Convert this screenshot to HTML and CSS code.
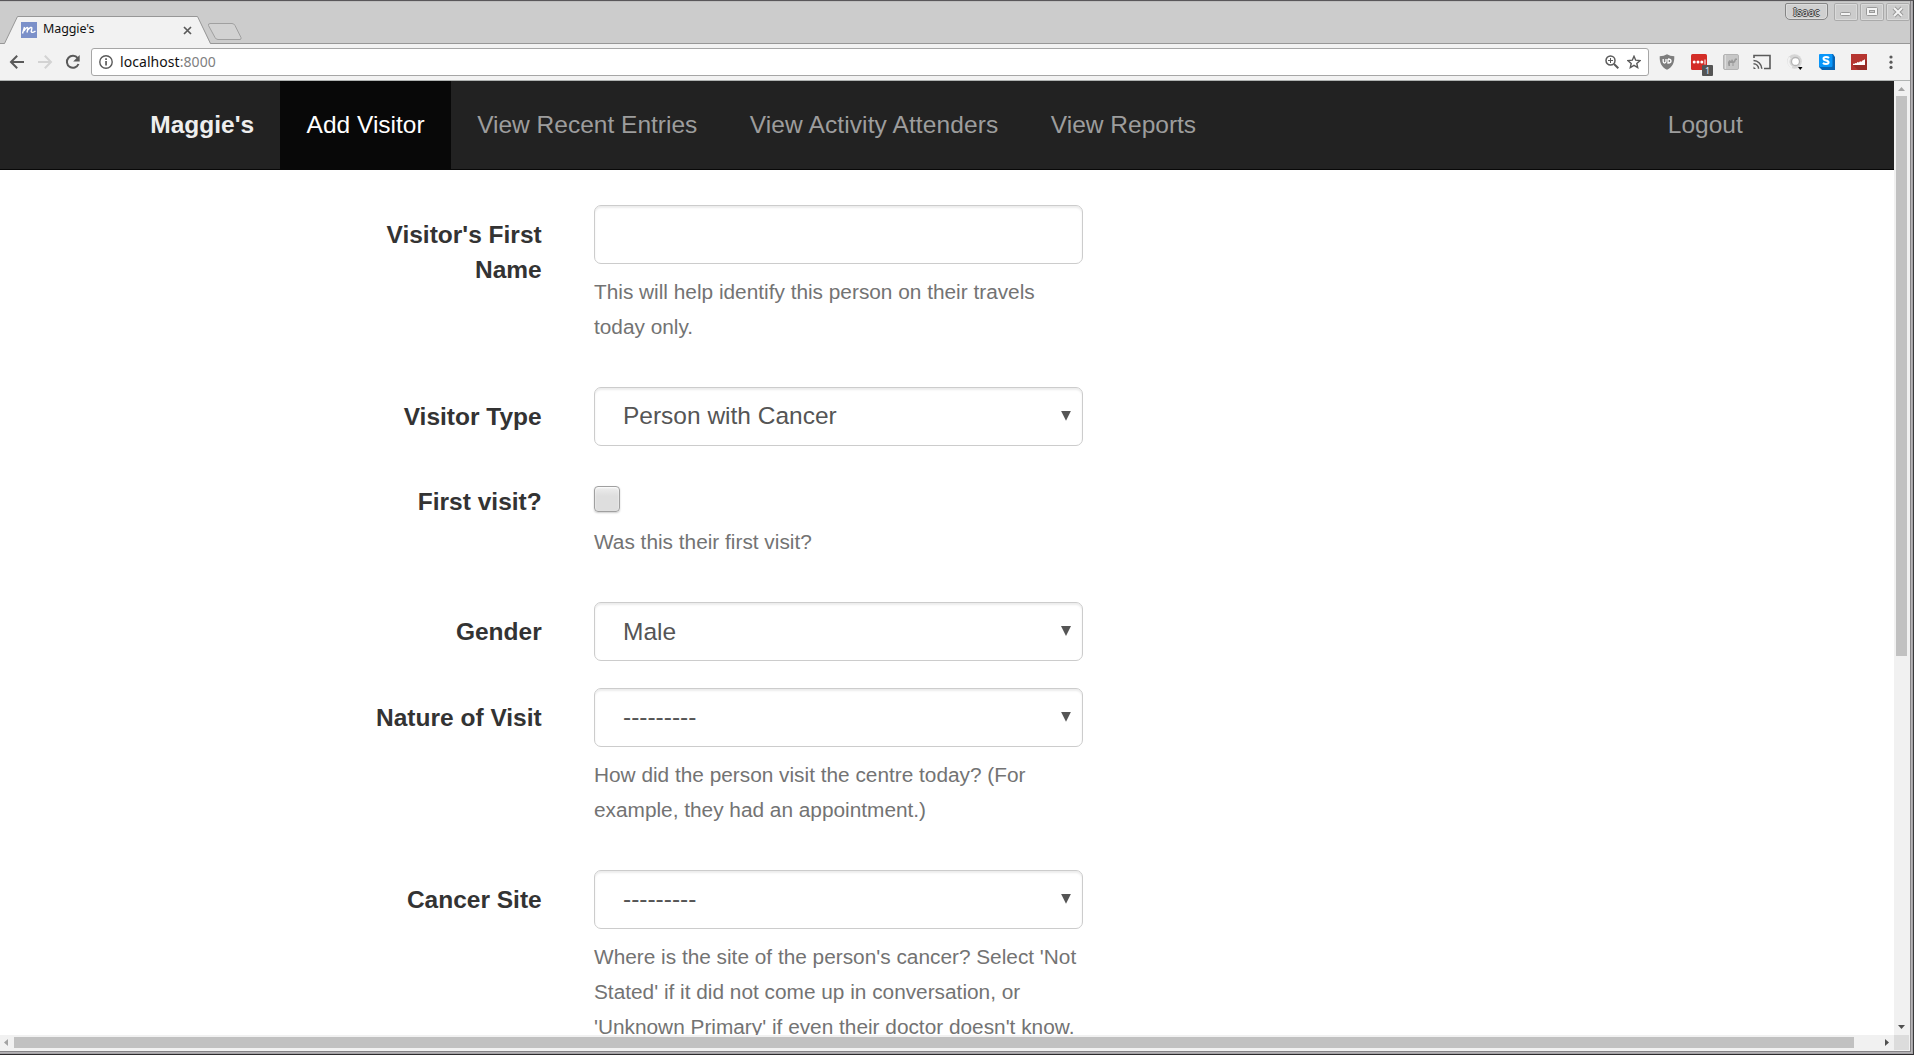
FILE: index.html
```html
<!DOCTYPE html>
<html lang="en">
<head>
<meta charset="utf-8">
<title>Maggie's</title>
<link rel="stylesheet" href="styles.css">
</head>
<body>
<div class="window">
  <header class="titlebar">
    <svg class="tab-shape" width="260" height="43" viewBox="0 0 260 43">
      <path d="M0 42.5H4.500L17.500 15.500H197.500L210 42.500H260V43H0Z" fill="#f2f2f2"/>
      <path d="M0 42.500H4.500L17.500 15.500H197.500L210.500 42.500H260" fill="none" stroke="#979797"/>
      <path d="M210 22.500H232Q234 22.500 235 24.500L241 36.500Q241.500 38.500 240 38.500H218Q216 38.500 215 36.500L208.500 24.500Q208 22.500 210 22.500Z" fill="#d2d2d2" stroke="#a0a0a0"/>
    </svg>
    <div class="tab">
      <svg width="16" height="16" viewBox="0 0 16 16"><path fill="#7b90c9" d="M0 0h16v16H0z"/><path d="M1.500 11.500 3.500 5M3 9C5 5 7.300 4.500 6.800 6.800L6 10.500M6.500 8.500C8.500 5 11.300 4.500 10.800 6.800L10.200 9.500Q11.500 11.500 14.500 9" fill="none" stroke="#fff" stroke-width="1.400"/></svg>
      <span class="tab-title">Maggie's</span>
      <svg width="9" height="9" viewBox="0 0 9 9"><path d="M1 1l7 7M8 1 1 8" stroke="#5a5a5a" stroke-width="1.700"/></svg>
    </div>
    <div class="controls">
      <span class="profile">Isaac</span>
      <span class="ctl"><svg width="24" height="18"><rect x="6.500" y="9.500" width="10" height="3" rx="1" fill="#f4f4f4" stroke="#999"/></svg></span>
      <span class="ctl"><svg width="24" height="18"><rect x="6.500" y="4.500" width="11" height="8" rx="1" fill="#f4f4f4" stroke="#999"/><rect x="9.500" y="7.500" width="5" height="2" fill="#ccc" stroke="#999"/></svg></span>
      <span class="ctl"><svg width="24" height="18"><path d="M8 5l8 8M16 5l-8 8" stroke="#999" stroke-width="4"/><path d="M8 5l8 8M16 5l-8 8" stroke="#f4f4f4" stroke-width="2"/></svg></span>
    </div>
  </header>

  <div class="toolbar">
    <div class="nav-icons">
      <svg width="16" height="16" viewBox="0 0 16 16"><path d="M15 8H2M8.200 1.800 2 8l6.200 6.200" fill="none" stroke="#5a5a5a" stroke-width="2"/></svg>
      <svg width="16" height="16" viewBox="0 0 16 16"><path d="M1 8h13M7.800 1.800 14 8l-6.200 6.200" fill="none" stroke="#d3d3d3" stroke-width="2"/></svg>
      <svg width="16" height="16" viewBox="0 0 16 16"><path d="M12.700 4.200A6 6 0 1 0 13.500 10" fill="none" stroke="#5a5a5a" stroke-width="2"/><path d="M14.700 1v6.500H8.200Z" fill="#5a5a5a"/></svg>
    </div>
    <div class="omnibox">
      <svg width="14" height="14" viewBox="0 0 14 14"><circle cx="7" cy="7" r="6.200" fill="none" stroke="#5a5a5a" stroke-width="1.400"/><path d="M6.200 6h1.700v4.500H6.200zM6.200 3.300h1.700V5H6.200z" fill="#5a5a5a"/></svg>
      <span class="url">localhost<span class="port">:8000</span></span>
      <svg width="14" height="14" viewBox="0 0 14 14"><circle cx="5.500" cy="5.500" r="4.500" fill="none" stroke="#5a5a5a" stroke-width="1.500"/><path d="M9 9l4.300 4.300" stroke="#5a5a5a" stroke-width="2"/><path d="M3 5.500h5M5.500 3v5" stroke="#5a5a5a"/></svg>
      <svg class="star" width="14" height="14" viewBox="0 0 14 14"><path d="M7 1.300 8.700 5.200 13 5.600 9.800 8.400 10.700 12.600 7 10.400 3.300 12.600 4.200 8.400 1 5.600 5.300 5.200Z" fill="none" stroke="#5a5a5a" stroke-width="1.400"/></svg>
    </div>
    <div class="extensions">
      <svg width="16" height="16" viewBox="0 0 16 16"><path d="M8 .3Q11 2.300 15.300 2.300C15.500 9 13.500 13 8 15.800 2.500 13 .500 9 .700 2.300Q5 2.300 8 .3Z" fill="#7d7d7d"/><path d="M4.200 5v2.500q0 1.500 1.300 1.500T7 7.500V5M9 5v4q3 0 3-2T9 5" fill="none" stroke="#fff" stroke-width="1.300"/></svg>
      <span class="ext-badged">
        <svg width="16" height="16" viewBox="0 0 16 16"><rect width="16" height="16" rx="1.500" fill="#d32d27"/><circle cx="3.200" cy="8" r="1.500" fill="#fff"/><circle cx="7" cy="8" r="1.500" fill="#fff"/><circle cx="10.800" cy="8" r="1.500" fill="#fff"/><path d="M14 5.500v5" stroke="#fff"/></svg>
        <span class="badge">1</span>
      </span>
      <svg width="16" height="16" viewBox="0 0 16 16"><rect x=".5" y=".5" width="15" height="15" rx="1.500" fill="#c6c6c6" stroke="#b4b4b4"/><path d="M2.500 1v14" stroke="#dedede"/><path d="M5 12V8L6.500 6 8 7l1-2 1.500 2.500L12 4.500h2V6h-1L12 8.500l-1.500.5v3h-1V9H7v3H6V9.500L5.500 12Z" fill="#989898"/></svg>
      <svg width="18" height="16" viewBox="0 0 18 16"><path d="M1 4V1.500h16v13h-6" fill="none" stroke="#5a5a5a" stroke-width="1.600"/><path d="M.5 6.500a8.500 8.500 0 0 1 8.300 8.300M.5 9.700a5.200 5.200 0 0 1 5.100 5.100" fill="none" stroke="#5a5a5a" stroke-width="1.500"/><path d="M.5 12.500 3 15H.5Z" fill="#5a5a5a"/></svg>
      <svg width="16" height="16" viewBox="0 0 16 16"><circle cx="7.500" cy="7.500" r="7.300" fill="#d6d6d6"/><path d="M3 3.500A6.500 6.500 0 0 0 5 13.500" fill="none" stroke="#f2f2f2" stroke-width="2"/><circle cx="8.500" cy="7.500" r="4" fill="#fff" stroke="#b4b4b4" stroke-width="1.300"/><path d="M11 13h4.500l-2.200 3z" fill="#000"/></svg>
      <svg width="16" height="16" viewBox="0 0 16 16"><path d="M2 0h12l2 3v13H3l-3-3Z" fill="#0864b4"/><rect width="13.500" height="13" rx="1" fill="#0896fa"/><path d="M10 4Q9 3 7 3 4.500 3 4.500 4.500T7 6.400 9.600 8.300 7 10Q5 10 3.900 9" fill="none" stroke="#fff" stroke-width="2"/></svg>
      <svg width="16" height="16" viewBox="0 0 16 16"><path fill="#b63530" d="M0 0h16v16H0z"/><path fill="#982c28" d="M2 11h12V5l2 2v9H7z"/><path d="M2 11V9.800h1.500L4.500 9 5.500 9.300l1-1.300 1.500.5 1-1.300 1.500.5L12 6l.8.300L14 5V11Z" fill="#fff"/></svg>
      <svg width="16" height="16" viewBox="0 0 16 16" fill="#5a5a5a"><circle cx="8" cy="3" r="1.600"/><circle cx="8" cy="8.200" r="1.600"/><circle cx="8" cy="13.400" r="1.600"/></svg>
    </div>
  </div>

  <div class="viewport">
    <div class="page">
      <nav class="navbar">
        <a class="brand">Maggie's</a>
        <a class="link active">Add Visitor</a>
        <a class="link">View Recent Entries</a>
        <a class="link activity">View Activity Attenders</a>
        <a class="link">View Reports</a>
        <a class="link logout">Logout</a>
      </nav>
      <form class="form">
        <div class="group">
          <label class="label">Visitor's First Name</label>
          <div class="field"><div class="control"></div><p class="help">This will help identify this person on their travels today only.</p></div>
        </div>
        <div class="group">
          <label class="label">Visitor Type</label>
          <div class="field"><div class="control select">Person with Cancer<i class="caret"></i></div></div>
        </div>
        <div class="group">
          <label class="label">First visit?</label>
          <div class="field"><div class="check-row"><span class="checkbox"></span></div><p class="help">Was this their first visit?</p></div>
        </div>
        <div class="group">
          <label class="label">Gender</label>
          <div class="field"><div class="control select">Male<i class="caret"></i></div></div>
        </div>
        <div class="group">
          <label class="label">Nature of Visit</label>
          <div class="field"><div class="control select">---------<i class="caret"></i></div><p class="help">How did the person visit the centre today? (For example, they had an appointment.)</p></div>
        </div>
        <div class="group">
          <label class="label">Cancer Site</label>
          <div class="field"><div class="control select">---------<i class="caret"></i></div><p class="help">Where is the site of the person's cancer? Select 'Not Stated' if it did not come up in conversation, or 'Unknown Primary' if even their doctor doesn't know.</p></div>
        </div>
      </form>
    </div>
    <div class="vscroll">
      <svg width="15" height="15"><path d="M4 10h7L7.500 6z" fill="#a3a3a3"/></svg>
      <div class="vthumb"></div>
      <svg class="end" width="15" height="15"><path d="M4 5h7L7.500 9z" fill="#505050"/></svg>
    </div>
    <div class="hscroll">
      <svg width="14" height="15"><path d="M8 4v7L4 7.500z" fill="#a3a3a3"/></svg>
      <div class="hthumb"></div>
      <svg class="end" width="15" height="15"><path d="M6 4v7l4-3.500z" fill="#505050"/></svg>
    </div>
    <div class="corner"></div>
  </div>
</div>
</body>
</html>
```
FILE: styles.css
```css
* { box-sizing: border-box; }
body { margin: 0; background: #fff; overflow: hidden; }
svg { display: block; flex: none; }

.window {
  width: 1914px;
  height: 1055px;
  display: grid;
  grid-template-rows: 42px 38px 970px;
  padding-right: 3px;
  background: #f1f1f1;
  border-top: 1px solid #59575a;
  border-right: 1px solid #3a3a3c;
  border-bottom: 1px solid #2d2b2e;
  box-shadow: inset -1px -1px #a5a3a6, inset -2px -2px #b5b3b6, inset -3px -3px #858386;
}

/* Title bar and tabs */
.titlebar {
  position: relative;
  display: flex;
  justify-content: space-between;
  background: #ccc;
  border-bottom: 1px solid #979797;
  border-top: 1px solid #bfbfbf;
  height: 43px;
}
.tab-shape { position: absolute; left: 0; top: -1px; }
.tab {
  position: relative;
  display: flex;
  align-items: center;
  width: 171px;
  height: 16px;
  margin: 20px 0 0 21px;
}
.tab-title {
  flex: 1;
  padding: 0 0 2px 6px;
  font: 12.5px/16px "Noto Sans", sans-serif;
  letter-spacing: -.1px;
  color: #111;
}
.controls { display: flex; gap: 2px; padding-top: 1px; }
.profile {
  width: 43px;
  height: 17px;
  margin-right: 4px;
  border: 1px solid #858585;
  border-radius: 2px 2px 5px 5px;
  background: #d0d0d0;
  box-shadow: inset 0 0 0 1px #dcdcdc;
  font: 10px/16px "Noto Sans", sans-serif;
  letter-spacing: .5px;
  text-align: center;
  color: #ddd;
  text-shadow: 1px 0 #444, -1px 0 #444, 0 1px #444, 0 -1px #444;
}
.ctl {
  width: 24px;
  height: 18px;
  border-radius: 2px;
  box-shadow: inset 0 0 0 1px #aaa, inset 0 0 0 2px #dadada;
}

/* Toolbar */
.toolbar {
  display: flex;
  align-items: center;
  background: #f2f2f2;
  border-bottom: 1px solid #b0b3b2;
}
.nav-icons { display: flex; gap: 12px; width: 91px; padding-left: 9px; }
.omnibox {
  display: flex;
  align-items: center;
  width: 1558px;
  height: 28px;
  padding: 0 7px;
  background: #fff;
  border: 1px solid #a6a6a6;
  border-radius: 3px;
}
.url {
  flex: 1;
  padding-left: 7px;
  font: 14px/20px "Noto Sans", sans-serif;
  letter-spacing: .06px;
  color: #111;
}
.port { color: #808080; }
.star { margin-left: 8px; }
.extensions { display: flex; width: 256px; margin-left: 2px; }
.extensions > * { margin: 0 8px; }
.extensions > svg[width="18"] { margin: 0 8px 0 6px; }
.ext-badged { position: relative; width: 16px; }
.badge {
  position: absolute;
  left: 11px;
  top: 11px;
  width: 11px;
  height: 11px;
  border-radius: 1px;
  background: #555;
  color: #dde8ff;
  font: 9px/11px "Noto Sans", sans-serif;
  text-align: center;
}

/* Content area with scrollbars */
.viewport {
  display: grid;
  grid-template: 954px 15px / 1894px 15px;
  width: 1909px;
}
.page {
  overflow: hidden;
  background: #fff;
  font: 24.5px/35px "Liberation Sans", Arial, sans-serif;
}
.vscroll, .hscroll { display: flex; background: #f1f1f1; }
.vscroll { flex-direction: column; }
.vthumb { height: 560px; margin: 0 2px; background: #c1c1c1; }
.hthumb { width: 1840px; margin: 2px 0; background: #c1c1c1; }
.vscroll .end { margin-top: auto; }
.hscroll .end { margin-left: auto; }
.corner { background: #dcdcdc; }

.navbar {
  display: flex;
  height: 89px;
  padding: 0 125px 0 124px;
  background: #222;
  border-bottom: 1px solid #080808;
}
.brand, .link { padding: 26.250px; white-space: nowrap; }
.brand { font-weight: bold; color: #eee; }
.link { color: #9d9d9d; }
.link.active { background: #080808; color: #fff; }
.activity { letter-spacing: .11px; }
.logout { margin-left: auto; }

.form { padding: 35px 0 0 323.200px; }
.group {
  display: grid;
  grid-template-columns: 218.500px 489px;
  column-gap: 52.300px;
  margin-bottom: 26.250px;
}
.label {
  padding-top: 11.600px;
  text-align: right;
  font-weight: bold;
  color: #333;
}
.control {
  height: 59px;
  margin-bottom: .5px;
  border: 1px solid #ccc;
  border-radius: 7px;
  box-shadow: inset 0 2px 2px rgba(0, 0, 0, .075);
}
.select {
  display: flex;
  align-items: center;
  justify-content: space-between;
  padding: 0 11px 1.500px 28px;
  color: #555;
}
.caret {
  width: 10px;
  height: 10px;
  background: #555;
  clip-path: polygon(0 0, 100% 0, 50% 100%);
}
.help {
  margin: 9.750px 0 17px;
  font-size: 20.825px;
  color: #737373;
}
.check-row { height: 42px; padding-top: 13px; }
.check-row + .help { margin-top: 8.750px; margin-bottom: 17.500px; }
.checkbox {
  display: block;
  width: 26px;
  height: 26px;
  border: 1px solid #a0a0a0;
  border-radius: 4px;
  background: linear-gradient(#ededed, #dedede 38%, #dedede);
  box-shadow: 0 1px 2px rgba(0, 0, 0, .2), inset 0 1px 2px #fff;
}
```
